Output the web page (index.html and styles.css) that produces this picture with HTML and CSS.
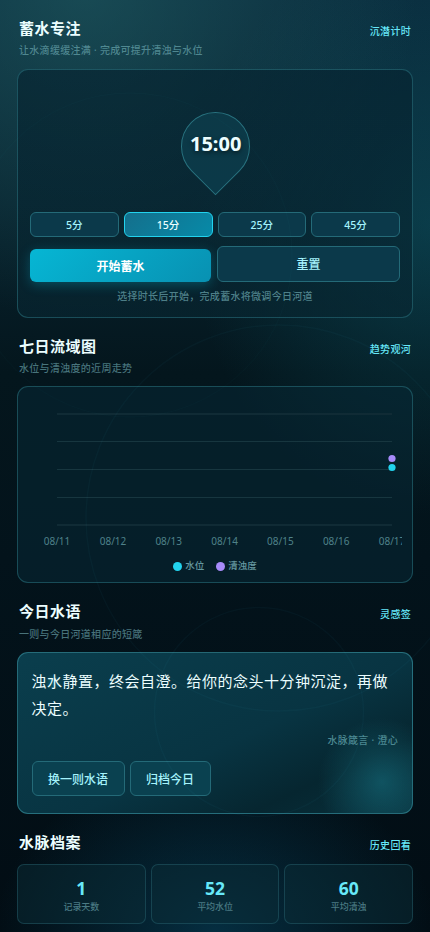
FILE: index.html
```html
<!DOCTYPE html>
<html lang="zh-CN">
<head>
<meta charset="utf-8">
<meta name="viewport" content="width=device-width, initial-scale=1">
<title>蓄水专注</title>
<link rel="stylesheet" href="styles.css">
</head>
<body>
<svg class="ripples" viewBox="0 0 430 932" aria-hidden="true">
  <circle cx="279" cy="518" r="193"/>
  <circle cx="259" cy="712" r="104.500"/>
  <circle class="faint" cx="130" cy="255" r="162"/>
</svg>
<main class="page">
  <section>
    <header class="head">
      <div><h2>蓄水专注</h2><p>让水滴缓缓注满 · 完成可提升清浊与水位</p></div>
      <span class="tag">沉潜计时</span>
    </header>
    <div class="card timer">
      <div class="drop"><span class="time">15:00</span></div>
      <div class="chips">
        <button class="chip">5分</button>
        <button class="chip active">15分</button>
        <button class="chip">25分</button>
        <button class="chip">45分</button>
      </div>
      <div class="actions">
        <button class="btn primary">开始蓄水</button>
        <button class="btn">重置</button>
      </div>
      <p class="hint">选择时长后开始，完成蓄水将微调今日河道</p>
    </div>
  </section>

  <section>
    <header class="head">
      <div><h2>七日流域图</h2><p>水位与清浊度的近周走势</p></div>
      <span class="tag">趋势观河</span>
    </header>
    <div class="card trend">
      <svg class="chart" width="372" height="154" viewBox="0 0 372 154">
        <g class="grid">
          <path class="wide" d="M27 15H362M27 126H362"/>
          <path d="M27 42.500H362M27 70.500H362M27 98.500H362"/>
        </g>
        <g class="axis">
          <text x="27" y="146">08/11</text>
          <text x="83" y="146">08/12</text>
          <text x="138.700" y="146">08/13</text>
          <text x="194.600" y="146">08/14</text>
          <text x="250.400" y="146">08/15</text>
          <text x="306.200" y="146">08/16</text>
          <text x="362" y="146">08/17</text>
        </g>
        <circle cx="362" cy="59.500" r="3.600" fill="#a78bfa"/>
        <circle cx="362" cy="68.500" r="3.600" fill="#22d3ee"/>
      </svg>
      <div class="legend">
        <span><i class="dot level"></i>水位</span>
        <span><i class="dot clarity"></i>清浊度</span>
      </div>
    </div>
  </section>

  <section>
    <header class="head tall">
      <div><h2>今日水语</h2><p>一则与今日河道相应的短箴</p></div>
      <span class="tag">灵感签</span>
    </header>
    <div class="card quote">
      <p class="words">浊水静置，终会自澄。给你的念头十分钟沉淀，再做决定。</p>
      <p class="author">水脉箴言 · 澄心</p>
      <div class="quote-actions">
        <button class="btn">换一则水语</button>
        <button class="btn">归档今日</button>
      </div>
    </div>
  </section>

  <section>
    <header class="head short">
      <div><h2>水脉档案</h2></div>
      <span class="tag">历史回看</span>
    </header>
    <div class="stats">
      <div class="stat"><b>1</b><span>记录天数</span></div>
      <div class="stat"><b>52</b><span>平均水位</span></div>
      <div class="stat"><b>60</b><span>平均清浊</span></div>
    </div>
  </section>
</main>
</body>
</html>
```
FILE: styles.css
```css
* { box-sizing: border-box; }

html { background: #020d14; }

body {
  margin: 0;
  height: 932px;
  overflow: hidden;
  position: relative;
  font-family: "Noto Sans", "Noto Sans CJK SC", sans-serif;
  letter-spacing: .3px;
  color: #ecfeff;
  background:
    radial-gradient(ellipse 330px 330px at 86px -10px, rgba(38, 105, 108, .5), transparent),
    radial-gradient(ellipse 240px 290px at 430px 225px, rgba(14, 100, 116, .4), transparent),
    radial-gradient(ellipse 220px 170px at 215px 932px, rgba(8, 78, 108, .5), transparent),
    linear-gradient(180deg, #0a2b3c 0%, #08232f 22%, #04161d 40%, #03131b 60%, #020d14 100%);
}

h2, p { margin: 0; }

.ripples {
  position: absolute;
  inset: 0;
  width: 430px;
  height: 932px;
  z-index: 1;
  fill: none;
  stroke: rgba(103, 232, 249, .032);
  stroke-width: 1.5;
  pointer-events: none;
}

.ripples .faint { stroke: rgba(103, 232, 249, .015); }

.page { padding: 18px 17px 0; }

section + section { margin-top: 18px; }

.head {
  display: flex;
  justify-content: space-between;
  height: 50px;
  padding: 0 2px;
}

section:first-child .head,
.head.tall { height: 51px; }

.head.short { height: 32px; }

.head h2 {
  margin-top: -1px;
  font-size: 15px;
  font-weight: 700;
  line-height: 22px;
  letter-spacing: .5px;
}

.head p {
  font-size: 10px;
  line-height: 16px;
  margin-top: 3px;
  font-weight: 500;
  color: rgba(126, 190, 197, .56);
}

.head.tall p { margin-top: 4px; }

.tag {
  font-size: 10px;
  font-weight: 500;
  line-height: 26px;
  color: #67e8f9;
}

.card {
  border: 1px solid rgba(56, 145, 158, .4);
  border-radius: 11px;
  background: rgba(8, 40, 52, .55);
}

.timer {
  height: 249px;
  padding: 42px 12px 0;
  background: linear-gradient(180deg, rgba(6, 35, 48, .65), rgba(8, 38, 49, .65));
}

.drop {
  width: 69px;
  height: 69px;
  margin: 0 auto;
  display: grid;
  place-items: center;
  border: 1px solid #28727f;
  border-radius: 50% 50% 0 50%;
  background: linear-gradient(-45deg, #0b3948, #0c3947);
  transform: rotate(45deg);
}

.time {
  transform: rotate(-45deg) translateY(-3px);
  font-size: 20px;
  font-weight: 700;
  letter-spacing: 0;
  text-shadow: 0 2px 4px rgba(0, 0, 0, .5);
}

.chips {
  display: grid;
  grid-template-columns: repeat(4, 1fr);
  gap: 5px;
  margin-top: 31px;
}

button {
  padding: 0;
  font: inherit;
  letter-spacing: 0;
  color: #a5f3fc;
  border: 1px solid #246a78;
  border-radius: 6px;
  background: #0b394a;
}

.chip {
  height: 25px;
  font-size: 10.500px;
  font-weight: 500;
}

.chip.active {
  color: #ecfeff;
  border-color: #22d3ee;
  background: linear-gradient(135deg, #146f8c, #078aa8);
}

.actions {
  display: flex;
  align-items: flex-end;
  gap: 6px;
  margin-top: 9px;
}

.btn {
  height: 36px;
  font-size: 12px;
  font-weight: 500;
}

.actions .btn { flex: 0 0 183px; }

.actions .primary {
  flex-basis: 181px;
  height: 33px;
  border: 0;
  color: #fff;
  font-weight: 700;
  background: linear-gradient(135deg, #06b6d4, #0891b2);
  box-shadow: 0 3px 12px rgba(6, 182, 212, .3);
}

.hint {
  margin-top: 6px;
  font-size: 10px;
  font-weight: 500;
  line-height: 16px;
  text-align: center;
  color: rgba(126, 190, 197, .62);
}

.trend {
  height: 197px;
  padding: 12px 12px 0;
}

.chart {
  display: block;
  overflow: hidden;
}

.grid path {
  fill: none;
  stroke: #17363f;
  stroke-width: 1;
}

.grid .wide {
  stroke: #102b35;
  stroke-width: 2;
}

.axis {
  fill: #4f828a;
  font-size: 10px;
  letter-spacing: 0;
  text-anchor: middle;
}

.legend {
  display: flex;
  justify-content: center;
  gap: 12px;
  margin-top: 5px;
  font-size: 9.500px;
  font-weight: 500;
  line-height: 16px;
  letter-spacing: 0;
  color: #6598a0;
}

.legend span {
  display: flex;
  align-items: center;
}

.dot {
  width: 9px;
  height: 9px;
  margin-right: 3px;
  border-radius: 50%;
}

.level { background: #22d3ee; }
.clarity { background: #a78bfa; }

.quote {
  height: 162px;
  padding: 15px 14px 0 13.500px;
  border-color: rgba(56, 145, 158, .6);
  background:
    radial-gradient(circle at 364px 129px, rgba(22, 110, 126, .6), transparent 64px),
    radial-gradient(circle at 35px 29px, rgba(34, 190, 210, .3), transparent 8px),
    linear-gradient(155deg, #0a3e4d 0%, #083442 55%, #062630 78%, #08303b 100%);
}

.words {
  font-size: 15px;
  line-height: 26.500px;
  letter-spacing: .5px;
  margin-right: -4px;
}

.author {
  margin: 11px 0 13px;
  font-size: 10px;
  font-weight: 500;
  line-height: 16px;
  text-align: right;
  color: #4c8992;
}

.quote-actions {
  display: flex;
  gap: 5px;
}

.quote-actions .btn {
  width: 93px;
  height: 35px;
  background: #0a4150;
}

.quote-actions .btn + .btn { width: 81px; }

.stats {
  display: grid;
  grid-template-columns: repeat(3, 1fr);
  gap: 5px;
}

.stat {
  display: flex;
  flex-direction: column;
  align-items: center;
  height: 60px;
  padding-top: 11px;
  border: 1px solid rgba(56, 130, 142, .32);
  border-radius: 7px;
  background: rgba(10, 43, 54, .5);
}

.stat b {
  font-size: 17.500px;
  line-height: 24px;
  letter-spacing: 0;
  color: #67e8f9;
}

.stat span {
  font-size: 9px;
  font-weight: 500;
  line-height: 14px;
  letter-spacing: -.1px;
  color: #4a7a83;
}
```
